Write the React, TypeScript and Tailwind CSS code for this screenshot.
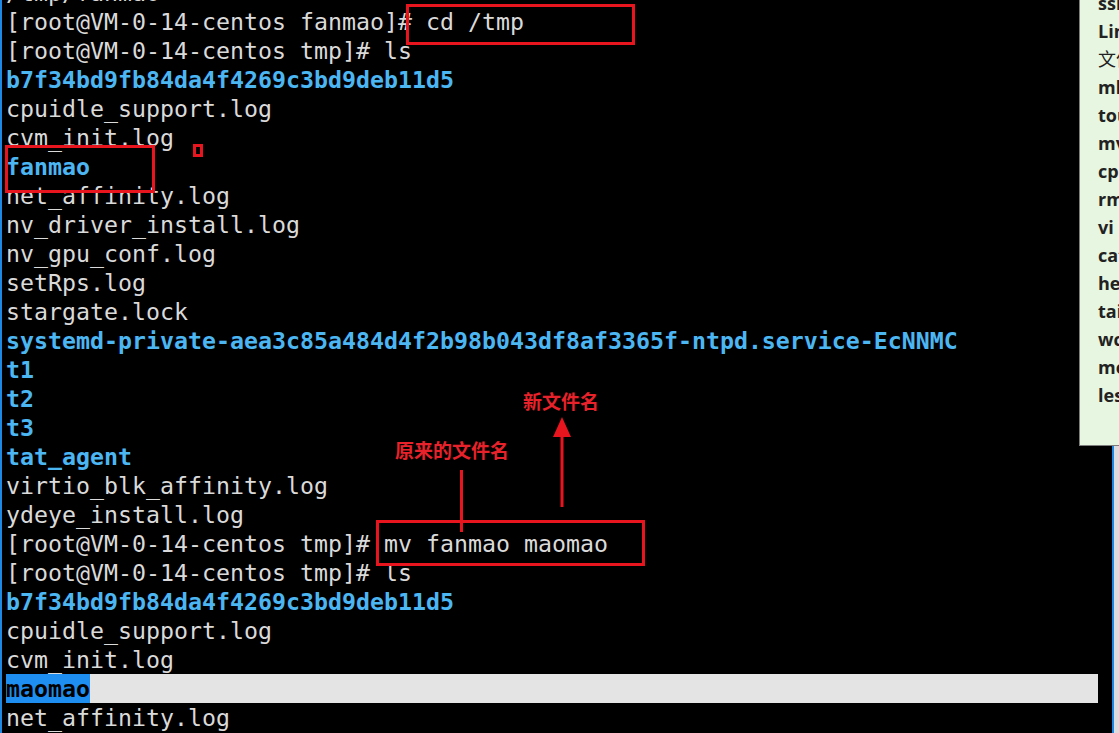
import React from "react";

type Line = { t: string; b?: boolean; hl?: boolean };

const lines: Line[] = [
  { t: "/tmp/fanmao" },
  { t: "[root@VM-0-14-centos fanmao]# cd /tmp" },
  { t: "[root@VM-0-14-centos tmp]# ls" },
  { t: "b7f34bd9fb84da4f4269c3bd9deb11d5", b: true },
  { t: "cpuidle_support.log" },
  { t: "cvm_init.log" },
  { t: "fanmao", b: true },
  { t: "net_affinity.log" },
  { t: "nv_driver_install.log" },
  { t: "nv_gpu_conf.log" },
  { t: "setRps.log" },
  { t: "stargate.lock" },
  { t: "systemd-private-aea3c85a484d4f2b98b043df8af3365f-ntpd.service-EcNNMC", b: true },
  { t: "t1", b: true },
  { t: "t2", b: true },
  { t: "t3", b: true },
  { t: "tat_agent", b: true },
  { t: "virtio_blk_affinity.log" },
  { t: "ydeye_install.log" },
  { t: "[root@VM-0-14-centos tmp]# mv fanmao maomao" },
  { t: "[root@VM-0-14-centos tmp]# ls" },
  { t: "b7f34bd9fb84da4f4269c3bd9deb11d5", b: true },
  { t: "cpuidle_support.log" },
  { t: "cvm_init.log" },
  { t: "maomao", hl: true },
  { t: "net_affinity.log" },
];

const panelItems = [
  "ssh",
  "Linux常用命令",
  "文件操作",
  "mkdir",
  "touch",
  "mv",
  "cp",
  "rm",
  "vi",
  "cat",
  "head",
  "tail",
  "wc",
  "more",
  "less",
];

export default function App() {
  return (
    <div className="relative w-[1119px] h-[733px] overflow-hidden bg-black">
      <div className="flex h-full">
        <div className="w-[2px] bg-[#1e88e5]" />
        <div className="flex-1 overflow-hidden pl-[4px]">
          <div className="mt-[-22.5px] flex flex-col font-['DejaVu_Sans_Mono',monospace] text-[23.25px] leading-[29px] whitespace-pre">
            {lines.map((l, i) =>
              l.hl ? (
                <div key={i} className="flex h-[29px] w-[1092px] bg-[#e4e4e4]">
                  <span className="bg-[#1e8ff0] font-bold text-black">{l.t}</span>
                </div>
              ) : (
                <div
                  key={i}
                  className={
                    l.b
                      ? "h-[29px] font-bold text-[#4cb6f2]"
                      : "h-[29px] text-[#dadada]"
                  }
                >
                  {l.t}
                </div>
              )
            )}
          </div>
        </div>
        <div className="w-[2px] bg-[#1e88e5]" />
        <div className="w-[5px] bg-[#dcdcdc]" />
      </div>

      {/* green side panel */}
      <div className="absolute left-[1079px] top-0 h-[446px] w-[60px] overflow-hidden border-l border-b border-[#7d7d7d] bg-[#e6f6e1]">
        <div className="mt-[-11px] flex flex-col pl-[18px] font-['Open_Sans','Noto_Sans_CJK_SC',sans-serif] text-[18px] font-bold leading-[28px] text-[#222] whitespace-nowrap">
          {panelItems.map((p, i) => (
            <div key={i} className={i === 2 ? "h-[28px] font-normal" : "h-[28px]"}>
              {p}
            </div>
          ))}
        </div>
      </div>

      {/* red annotation boxes */}
      <div className="absolute left-[406px] top-[4px] h-[41px] w-[229px] border-[3px] border-[#e8141e]" />
      <div className="absolute left-[5px] top-[145px] h-[48px] w-[150px] border-[3px] border-[#e8141e]" />
      <div className="absolute left-[193px] top-[144px] h-[13px] w-[10px] border-[3px] border-[#e8141e]" />
      <div className="absolute left-[376px] top-[520px] h-[46px] w-[269px] border-[3px] border-[#e8141e]" />

      {/* annotation labels */}
      <div className="absolute left-[523px] top-[391px] font-['Noto_Sans_CJK_SC',sans-serif] text-[19px] font-bold leading-[19px] text-[#e8222a]">
        新文件名
      </div>
      <div className="absolute left-[395px] top-[440px] font-['Noto_Sans_CJK_SC',sans-serif] text-[19px] font-bold leading-[19px] text-[#e8222a]">
        原来的文件名
      </div>

      {/* line from old name */}
      <div className="absolute left-[460px] top-[470px] h-[62px] w-[3px] bg-[#e8141e]" />

      {/* arrow to new name */}
      <svg className="absolute left-[550px] top-[415px]" width="24" height="95" viewBox="0 0 24 95">
        <polygon points="12,2 3,22 21,22" fill="#e8141e" />
        <rect x="10.5" y="20" width="3" height="72" fill="#e8141e" />
      </svg>
    </div>
  );
}
